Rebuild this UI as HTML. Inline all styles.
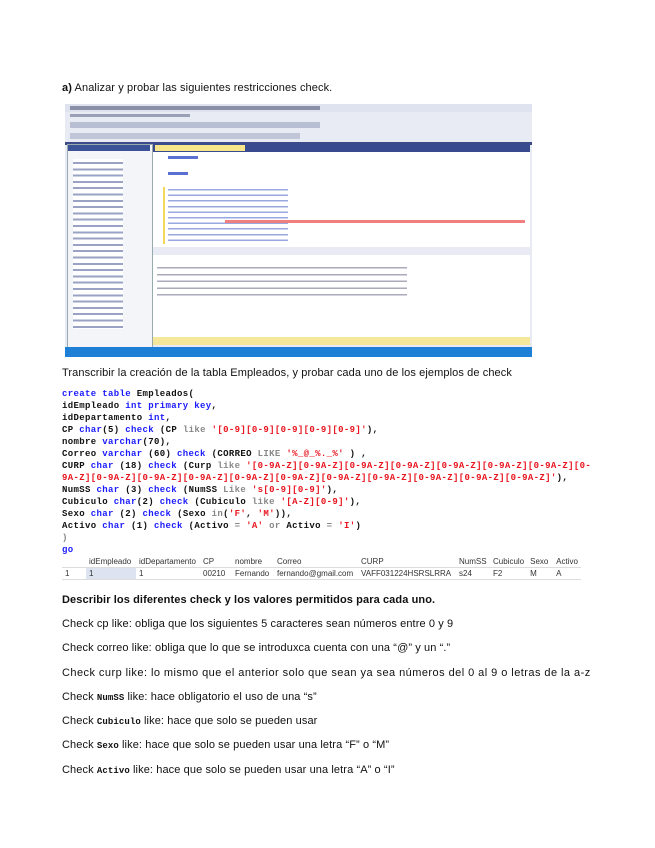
<!DOCTYPE html>
<html><head><meta charset="utf-8"><style>
body{margin:0;width:655px;height:848px;background:#fff;position:relative;overflow:hidden;font-family:"Liberation Sans",sans-serif;}
.t{position:absolute;left:62px;font-size:11px;color:#111;white-space:nowrap;letter-spacing:0.1px}
.code{position:absolute;left:62px;top:388px;font-family:"Liberation Mono",monospace;font-size:9px;font-weight:bold;line-height:12px;white-space:pre;color:#111;letter-spacing:0.35px}
.k{color:#1a1aff}.r{color:#e8141e}.g{color:#888}
.ss{position:absolute;left:65px;top:104px;width:467px;height:253px;background:#e8ebf4;overflow:hidden}
.ss div{position:absolute}
table.res{position:absolute;left:62px;top:556px;border-collapse:collapse;font-size:8px;color:#333}
table.res td{height:11px;padding:0 3px;border-bottom:1px solid #ddd;white-space:nowrap}
.mc{font-family:"Liberation Mono",monospace;font-weight:bold;font-size:9px}
</style></head><body>
<div class="t" style="top:82px"><span style="font-weight:bold">a)</span> Analizar y probar las siguientes restricciones check.</div>

<div class="ss">
 <div style="left:0;top:0;width:467px;height:8px;background:#dfe3ef"></div>
 <div style="left:5px;top:2px;width:250px;height:4px;background:#8a8fa8"></div>
 <div style="left:5px;top:10px;width:120px;height:3px;background:#9aa0b5"></div>
 <div style="left:5px;top:18px;width:250px;height:6px;background:#b8bfd3"></div>
 <div style="left:5px;top:29px;width:230px;height:6px;background:#c0c6d8"></div>
 <div style="left:0;top:38px;width:467px;height:3px;background:#3d4a8a"></div>
 <div style="left:2px;top:40px;width:84px;height:203px;background:#f4f5f8;border:1px solid #9aa"></div>
 <div style="left:3px;top:41px;width:82px;height:6px;background:#3b5299"></div>
 <div style="left:8px;top:55px;width:50px;height:170px;background:repeating-linear-gradient(#fff 0 3px,#9aa3c4 3px 5px,#fff 5px 6.3px)"></div>
 <div style="left:88px;top:40px;width:377px;height:8px;background:#3a4a8f"></div>
 <div style="left:90px;top:41px;width:90px;height:6px;background:#f7e58a"></div>
 <div style="left:88px;top:48px;width:377px;height:95px;background:#fff"></div>
 <div style="left:103px;top:52px;width:30px;height:3px;background:#5a6fd0"></div>
 <div style="left:103px;top:68px;width:20px;height:3px;background:#5a6fd0"></div>
 <div style="left:103px;top:83px;width:120px;height:57px;background:repeating-linear-gradient(#fff 0 2px,#9aa8e0 2px 3.5px,#fff 3.5px 5.6px)"></div>
 <div style="left:160px;top:116px;width:300px;height:3px;background:#f08080"></div>
 <div style="left:98px;top:83px;width:2px;height:57px;background:#f2d95a"></div>
 <div style="left:88px;top:143px;width:377px;height:8px;background:#e8ebf4"></div>
 <div style="left:88px;top:151px;width:377px;height:82px;background:#fff"></div>
 <div style="left:92px;top:160px;width:250px;height:35px;background:repeating-linear-gradient(#fff 0 3px,#aab 3px 4.5px,#fff 4.5px 6.8px)"></div>
 <div style="left:88px;top:233px;width:377px;height:8px;background:#f5e89a"></div>
 <div style="left:0;top:243px;width:467px;height:10px;background:#1e7fd6"></div>
</div>

<div class="t" style="top:367px">Transcribir la creación de la tabla Empleados, y probar cada uno de los ejemplos de check</div>

<div class="code"><span class="k">create table</span> Empleados(
idEmpleado <span class="k">int primary key</span>,
idDepartamento <span class="k">int</span>,
CP <span class="k">char</span>(5) <span class="k">check</span> (CP <span class="g">like</span> <span class="r">'[0-9][0-9][0-9][0-9][0-9]'</span>),
nombre <span class="k">varchar</span>(70),
Correo <span class="k">varchar</span> (60) <span class="k">check</span> (CORREO <span class="g">LIKE</span> <span class="r">'%_@_%._%'</span> ) ,
CURP <span class="k">char</span> (18) <span class="k">check</span> (Curp <span class="g">like</span> <span class="r">'[0-9A-Z][0-9A-Z][0-9A-Z][0-9A-Z][0-9A-Z][0-9A-Z][0-9A-Z][0-</span>
<span class="r">9A-Z][0-9A-Z][0-9A-Z][0-9A-Z][0-9A-Z][0-9A-Z][0-9A-Z][0-9A-Z][0-9A-Z][0-9A-Z][0-9A-Z]'</span>),
NumSS <span class="k">char</span> (3) <span class="k">check</span> (NumSS <span class="g">Like</span> <span class="r">'s[0-9][0-9]'</span>),
Cubiculo <span class="k">char</span>(2) <span class="k">check</span> (Cubiculo <span class="g">like</span> <span class="r">'[A-Z][0-9]'</span>),
Sexo <span class="k">char</span> (2) <span class="k">check</span> (Sexo <span class="g">in</span>(<span class="r">'F'</span>, <span class="r">'M'</span>)),
Activo <span class="k">char</span> (1) <span class="k">check</span> (Activo <span class="g">=</span> <span class="r">'A'</span> <span class="g">or</span> Activo <span class="g">=</span> <span class="r">'I'</span>)
<span class="g">)</span>
<span class="k">go</span></div>

<table class="res">
<tr><td style="width:18px"></td><td style="width:44px">idEmpleado</td><td style="width:58px">idDepartamento</td><td style="width:26px">CP</td><td style="width:36px">nombre</td><td style="width:78px">Correo</td><td style="width:92px">CURP</td><td style="width:28px">NumSS</td><td style="width:30px">Cubiculo</td><td style="width:20px">Sexo</td><td>Activo</td></tr>
<tr><td>1</td><td style="background:#dde3f0">1</td><td>1</td><td>00210</td><td>Fernando</td><td>fernando@gmail.com</td><td>VAFF031224HSRSLRRA</td><td>s24</td><td>F2</td><td>M</td><td>A</td></tr>
</table>

<div class="t" style="top:594px;font-weight:bold">Describir los diferentes check y los valores permitidos para cada uno.</div>
<div class="t" style="top:618px">Check cp like: obliga que los siguientes 5 caracteres sean números entre 0 y 9</div>
<div class="t" style="top:642px">Check correo like: obliga que lo que se introduxca cuenta con una “@” y un “.”</div>
<div class="t" style="top:667px;letter-spacing:0.45px">Check curp like: lo mismo que el anterior solo que sean ya sea números del 0 al 9 o letras de la a-z</div>
<div class="t" style="top:691px">Check <span class="mc">NumSS</span> like: hace obligatorio el uso de una “s”</div>
<div class="t" style="top:715px">Check <span class="mc">Cubiculo</span> like: hace que solo se pueden usar</div>
<div class="t" style="top:739px">Check <span class="mc">Sexo</span> like: hace que solo se pueden usar una letra “F” o “M”</div>
<div class="t" style="top:764px">Check <span class="mc">Activo</span> like: hace que solo se pueden usar una letra “A” o “I”</div>
</body></html>
